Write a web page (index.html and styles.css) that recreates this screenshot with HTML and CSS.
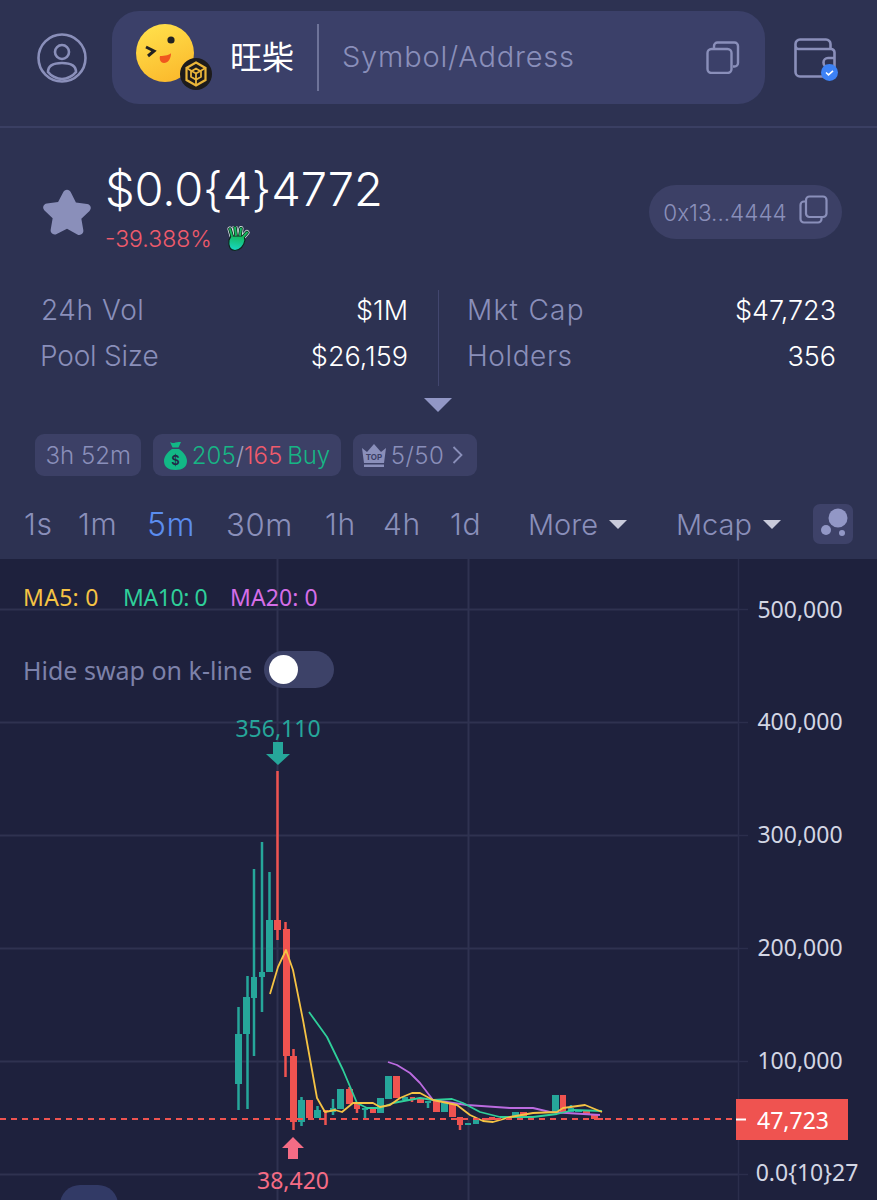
FILE: index.html
```html
<!DOCTYPE html>
<html lang="en">
<head>
<meta charset="utf-8">
<title>旺柴 chart</title>
<link rel="stylesheet" href="styles.css">
</head>
<body>
<div class="page">
  <header class="topbar">
    <svg class="avatar-icon" viewBox="0 0 50 50" fill="none" stroke="#8a8fba" stroke-width="2.6">
      <circle cx="25" cy="25" r="23.5"/>
      <circle cx="25" cy="19" r="7"/>
      <path d="M11 39c0-6 5-9 14-9s14 3 14 9c-3 4-9 7-14 7s-11-3-14-7z"/>
    </svg>
    <div class="search">
      <div class="token-logo">
        <svg class="emoji" viewBox="0 0 58 58">
          <defs><linearGradient id="emojiFill" x1="0.3" y1="0" x2="0.7" y2="1"><stop offset="0" stop-color="#ffdf4a"/><stop offset="1" stop-color="#fbb92c"/></linearGradient></defs>
          <circle cx="29" cy="29" r="29" fill="url(#emojiFill)"/>
          <path d="M10 23l8 4-6 5" fill="none" stroke="#222" stroke-width="3"/>
          <circle cx="35" cy="16" r="3.6" fill="#222"/>
          <path d="M24 32c5 0 10-1 11-3 0 6-3 10-7 10-3 0-5-3-4-7z" fill="#f0561e"/>
        </svg>
        <svg class="chain-badge" viewBox="0 0 32 32">
          <circle cx="16" cy="16" r="16" fill="#1d1b1c"/>
          <path d="M16 4.500l9.500 5.500v12L16 27.500 6.500 22V10z" fill="none" stroke="#e9b53a" stroke-width="2.200"/>
          <path d="M16 10.500l5 2.900v5.400L16 21.700l-5-2.900v-5.400zM6.500 10l9.500 5.500 9.500-5.500M16 15.500v12" fill="none" stroke="#e9b53a" stroke-width="1.800"/>
        </svg>
      </div>
      <span class="token-name">旺柴</span>
      <span class="search-divider"></span>
      <span class="placeholder">Symbol/Address</span>
      <svg class="paste-icon" viewBox="0 0 34 33" fill="none" stroke="#8a8fba" stroke-width="2.400">
        <rect x="1.500" y="8" width="24" height="24" rx="4"/>
        <path d="M8 7V5a3.500 3.500 0 0 1 3.500-3.500h17A3.500 3.500 0 0 1 32 5v17a3.500 3.500 0 0 1-3.500 3.500H27"/>
      </svg>
    </div>
    <div class="wallet">
      <svg class="wallet-icon" viewBox="0 0 42 40" fill="none" stroke="#8a8fba" stroke-width="2.600">
        <path d="M1.500 8V6a4.500 4.500 0 0 1 4.500-4.500h26A4.500 4.500 0 0 1 36.500 6v4"/>
        <path d="M1.500 8a3 3 0 0 0 3 3H37a3.500 3.500 0 0 1 3.500 3.500V34a4.500 4.500 0 0 1-4.500 4.500H6A4.500 4.500 0 0 1 1.500 34z"/>
        <path d="M40 20h-6a4.500 4.500 0 0 0 0 9h6"/>
      </svg>
      <svg class="wallet-check" viewBox="0 0 17 17">
        <circle cx="8.500" cy="8.500" r="8.500" fill="#3d82f5"/>
        <path d="M5 8.500l2.500 2.300L12 6.800" fill="none" stroke="#fff" stroke-width="1.600"/>
      </svg>
    </div>
  </header>

  <section class="summary">
    <div class="price-row">
      <svg class="star" viewBox="2 2 46 44"><path d="M25 2.500c1.600 0 2.800 1 3.500 2.500l4.700 9.300 10.300 1.500c3.300.5 4.500 4 2.200 6.300l-7.500 7.300 1.800 10.300c.6 3.200-2.600 5.600-5.500 4.100L25 38.500l-9.500 4.800c-2.900 1.500-6.100-.9-5.500-4.100l1.800-10.300-7.500-7.300c-2.300-2.300-1.100-5.800 2.200-6.300l10.300-1.500L21.500 5c.700-1.500 1.900-2.500 3.500-2.500z" fill="#8a8fba"/></svg>
      <div class="price-block">
        <div class="price">$0.0{4}4772</div>
        <div class="change">
          <span>-39.388%</span>
          <svg class="hand" viewBox="0 0 24 26">
            <defs><linearGradient id="handFill" x1="0.6" y1="0" x2="0.4" y2="1"><stop offset="0" stop-color="#16b85f"/><stop offset="1" stop-color="#17d8c4"/></linearGradient></defs>
            <path d="M6 10L4 3M10 9L9 1.500M14 9L15 2.500M17 11L21 6.500" fill="none" stroke="#dff5ee" stroke-width="5" stroke-linecap="round"/>
            <path d="M6 10L4 3M10 9L9 1.500M14 9L15 2.500M17 11L21 6.500" fill="none" stroke="#10231e" stroke-width="3.600" stroke-linecap="round"/>
            <path d="M5 10h13l1 4c-1 6-5 10.500-10 10.500S2 20 3 14z" fill="url(#handFill)" stroke="#10231e" stroke-width="1.200"/>
            <path d="M6 10L4 3M10 9L9 1.500M14 9L15 2.500M17 11L21 6.500" fill="none" stroke="#16b85f" stroke-width="2" stroke-linecap="round"/>
          </svg>
        </div>
      </div>
      <div class="address-pill">
        <span>0x13...4444</span>
        <svg class="pill-copy" viewBox="0 0 29 29" fill="none" stroke="#8a8fba" stroke-width="2.200">
          <rect x="7" y="1.500" width="20.500" height="20.500" rx="3.500"/>
          <path d="M7 6.500H5A3.500 3.500 0 0 0 1.500 10v14A3.500 3.500 0 0 0 5 27.500h14a3.500 3.500 0 0 0 3.500-3.500v-2"/>
        </svg>
      </div>
    </div>

    <div class="stats">
      <div class="stat"><span class="stat-label">24h Vol</span><span class="stat-value">$1M</span></div>
      <div class="stat"><span class="stat-label label-mcap">Mkt Cap</span><span class="stat-value">$47,723</span></div>
      <div class="stat"><span class="stat-label label-pool">Pool Size</span><span class="stat-value">$26,159</span></div>
      <div class="stat"><span class="stat-label">Holders</span><span class="stat-value">356</span></div>
    </div>
    <div class="expand-row"><span class="expand-arrow"></span></div>

    <div class="tags">
      <div class="tag">3h 52m</div>
      <div class="tag">
        <svg class="bag" viewBox="0 0 23 29">
          <path d="M6 1c2 1 3 1.500 5.500 .5S16 1 17 1l-2.500 5.500h-6zM8 8h7c4.500 3 8 7.500 8 12 0 6-4.500 9-11.500 9S0 26 0 20c0-4.500 3.500-9 8-12z" fill="#12b886"/>
          <text x="11.500" y="23.500" class="bag-sign">$</text>
        </svg>
        <span class="up">205</span><span class="slash">/</span><span class="down">165</span><span class="up buy">Buy</span>
      </div>
      <div class="tag tag-top">
        <svg class="crown" viewBox="0 0 24 25">
          <path d="M0 5l5 4 7-8 7 8 5-4-2 15H2z" fill="#8a8fba"/>
          <rect x="2" y="21.500" width="20" height="2.500" fill="#8a8fba"/>
          <text x="12" y="16.500" class="crown-text">TOP</text>
        </svg>
        <span>5/50</span>
        <svg class="chev" viewBox="0 0 11 20" fill="none" stroke="#8a8fba" stroke-width="1.800"><path d="M1.500 2l8 8-8 8"/></svg>
      </div>
    </div>

    <nav class="intervals">
      <span class="iv iv-1s">1s</span>
      <span class="iv iv-1m">1m</span>
      <span class="iv iv-5m active">5m</span>
      <span class="iv iv-30m">30m</span>
      <span class="iv iv-1h">1h</span>
      <span class="iv iv-4h">4h</span>
      <span class="iv iv-1d">1d</span>
      <span class="drop drop-more">More<i class="caret"></i></span>
      <span class="drop drop-mcap">Mcap<i class="caret"></i></span>
      <svg class="bubble" viewBox="0 0 40 40">
        <rect width="40" height="40" rx="7" fill="#3e4269"/>
        <circle cx="25" cy="14" r="9.500" fill="#9297c6"/>
        <circle cx="13" cy="26" r="5" fill="#9297c6"/>
        <circle cx="29" cy="29" r="3" fill="#9297c6"/>
      </svg>
    </nav>
  </section>

  <section class="chart">
    <svg class="chart-canvas" viewBox="0 559 877 641">
      <g class="grid">
        <path d="M0 609.500H738M0 722.500H738M0 835.500H738M0 948.500H738M0 1061.500H738M0 1174.500H738"/>
        <path d="M277.500 559V1200M468.500 559V1200"/>
      </g>
      <path class="axis-line" d="M738.500 559V1200"/>
      <path class="ticks" d="M738 609.500H748M738 722.500H748M738 835.500H748M738 948.500H748M738 1061.500H748M738 1174.500H748"/>

      <g class="wick-up">
        <path d="M238.500 1007V1110M247.500 976V1109M254 869V1056M262 842V1012M269.500 872V925M301.500 1097V1126M317.500 1106V1118M333 1099V1115M365 1108V1118M381 1098V1113M428 1101V1108M571 1105V1112"/>
      </g>
      <g class="body-up">
        <rect x="235" y="1034" width="7" height="50"/>
        <rect x="243" y="997" width="7" height="37"/>
        <rect x="251" y="977" width="6" height="21"/>
        <rect x="259" y="972" width="6" height="5"/>
        <rect x="266" y="920" width="7" height="52"/>
        <rect x="298" y="1100" width="7" height="22"/>
        <rect x="314" y="1110" width="7" height="8"/>
        <rect x="330" y="1108" width="6" height="4"/>
        <rect x="337" y="1089" width="7" height="20"/>
        <rect x="362" y="1108" width="6" height="2"/>
        <rect x="377" y="1098" width="7" height="15"/>
        <rect x="385" y="1076" width="7" height="23"/>
        <rect x="402" y="1097" width="6" height="3"/>
        <rect x="425" y="1101" width="6" height="2"/>
        <rect x="441" y="1103" width="7" height="9"/>
        <rect x="465" y="1123" width="6" height="2"/>
        <rect x="473" y="1119" width="6" height="5"/>
        <rect x="512" y="1112" width="7" height="5"/>
        <rect x="552" y="1095" width="7" height="17"/>
        <rect x="568" y="1108" width="6" height="4"/>
        <rect x="575" y="1110" width="7" height="2"/>
      </g>
      <g class="wick-down">
        <path d="M277.500 771V940M285.500 922V1077M293.500 1049V1130M309.500 1100V1120M325.500 1110V1125M349.500 1087V1104M357 1104V1113M412 1097V1102M460 1117V1130"/>
      </g>
      <g class="body-down">
        <rect x="274" y="920" width="7" height="10"/>
        <rect x="283" y="929" width="7" height="127"/>
        <rect x="290" y="1056" width="7" height="66"/>
        <rect x="306" y="1100" width="7" height="18"/>
        <rect x="323" y="1110" width="5" height="2"/>
        <rect x="346" y="1089" width="7" height="15"/>
        <rect x="354" y="1104" width="6" height="5"/>
        <rect x="370" y="1109" width="6" height="4"/>
        <rect x="393" y="1076" width="7" height="22"/>
        <rect x="410" y="1097" width="5" height="3"/>
        <rect x="417" y="1098" width="7" height="5"/>
        <rect x="433" y="1101" width="7" height="11"/>
        <rect x="449" y="1103" width="7" height="14"/>
        <rect x="457" y="1117" width="6" height="8"/>
        <rect x="482" y="1118" width="4" height="2"/>
        <rect x="489" y="1117" width="6" height="3"/>
        <rect x="520" y="1112" width="7" height="5"/>
        <rect x="560" y="1095" width="6" height="17"/>
        <rect x="583" y="1111" width="7" height="4"/>
        <rect x="591" y="1114" width="7" height="5"/>
        <rect x="598" y="1118" width="5" height="2"/>
      </g>

      <path class="ma ma20" d="M388 1062L397 1065L410 1073L420 1083L433 1100L467 1105L510 1108L533 1108L550 1112L600 1115"/>
      <path class="ma ma10" d="M309 1012L327 1037L343 1070L357 1103L367 1108L380 1108L393 1103L420 1098L433 1100L452 1099L463 1103L480 1112L500 1117L533 1117L557 1114L573 1110L602 1111"/>
      <path class="ma ma5" d="M270 994L278 967L286 950L293 970L303 1020L317 1098L325 1112L335 1110L342 1112L353 1103L373 1103L380 1107L390 1105L400 1098L412 1093L420 1093L433 1100L457 1105L470 1115L483 1121L493 1122L510 1117L533 1113L557 1112L563 1108L585 1105L602 1112"/>

      <path class="last-line" d="M0 1119H736"/>

      <path class="mark-up" d="M273 742h10v12h7l-12 11-12-11h7z"/>
      <text class="mark-label mark-high" x="278" y="737">356,110</text>
      <path class="mark-low-arrow" d="M293 1137l11 11h-6v11h-10v-11h-6z"/>
      <text class="mark-label mark-low" x="293" y="1189">38,420</text>

      <g class="axis-labels">
        <text x="800" y="618">500,000</text>
        <text x="800" y="730">400,000</text>
        <text x="800" y="843">300,000</text>
        <text x="800" y="956">200,000</text>
        <text x="800" y="1069">100,000</text>
        <text x="807" y="1181">0.0{10}27</text>
      </g>
      <rect class="last-box" x="736" y="1099" width="112" height="41"/>
      <path class="last-tick" d="M736 1119.500H746"/>
      <text class="last-text" x="793" y="1129">47,723</text>
    </svg>

    <div class="legend">
      <span class="ma5-text">MA5: 0</span>
      <span class="ma10-text">MA10: 0</span>
      <span class="ma20-text">MA20: 0</span>
    </div>
    <div class="swap-toggle">
      <span>Hide swap on k-line</span>
      <span class="switch"><span class="knob"></span></span>
    </div>
    <div class="peek"></div>
  </section>
</div>
</body>
</html>
```

FILE: styles.css
```css
* { box-sizing: border-box; }
html, body { margin: 0; padding: 0; background: #1e213d; }
body { font-family: "Inter", "Noto Sans CJK SC", sans-serif; font-weight: 300; color: #fff; }
.page { width: 877px; height: 1200px; overflow: hidden; display: flex; flex-direction: column; }

/* top bar */
.topbar { height: 128px; flex: none; background: #2d3252; border-bottom: 2px solid #3a3f63; display: flex; align-items: center; padding: 0 41px 0 37px; }
.avatar-icon { width: 50px; height: 50px; flex: none; margin-top: -11px; }
.search { width: 653px; height: 93px; margin: -11px 0 0 25px; background: #3b4069; border-radius: 27px; display: flex; align-items: center; padding-left: 24px; flex: none; }
.token-logo { width: 76px; height: 66px; position: relative; flex: none; margin-top: -2px; }
.emoji { width: 58px; height: 58px; position: absolute; left: 0; top: 0; }
.chain-badge { width: 32px; height: 32px; position: absolute; left: 44px; top: 34px; }
.token-name { font-size: 32px; font-weight: 400; font-family: "Noto Sans CJK SC", sans-serif; width: 65px; margin: -5px 0 0 18px; white-space: nowrap; }
.search-divider { width: 2px; height: 67px; background: #6e7399; margin: 0 23px 0 22px; flex: none; }
.placeholder { font-size: 29px; color: #8a8fba; letter-spacing: 0.8px; flex: 1; white-space: nowrap; margin-top: -2px; }
.paste-icon { width: 34px; height: 33px; margin-right: 25px; flex: none; }
.wallet { position: relative; width: 42px; height: 40px; margin: -10px 0 0 29px; flex: none; }
.wallet-icon { width: 42px; height: 40px; display: block; }
.wallet-check { position: absolute; width: 17px; height: 17px; left: 27px; top: 26px; }

/* summary */
.summary { height: 431px; flex: none; background: #2d3252; display: flex; flex-direction: column; }
.price-row { display: flex; align-items: flex-start; padding: 32px 35px 0 42px; height: 159px; flex: none; }
.star { width: 50px; height: 48px; flex: none; margin: 29px 13px 0 0; }
.price-block { flex: 1; }
.price { font-size: 47px; line-height: 58px; letter-spacing: -0.15px; }
.change { display: flex; align-items: center; gap: 14px; font-size: 23px; color: #ef5b6c; height: 28px; margin-top: 7px; }
.hand { width: 24px; height: 26px; }
.address-pill { height: 54px; margin-top: 25px; width: 193px; flex: none; background: #3c4066; border-radius: 27px; display: flex; align-items: center; justify-content: center; gap: 12px; font-size: 22.500px; color: #8a8fba; }
.pill-copy { width: 29px; height: 29px; flex: none; margin-top: -5px; }

.stats { display: grid; grid-template-columns: 397px 398px; padding-left: 41px; height: 92px; flex: none; grid-auto-rows: 46px; position: relative; }
.stats::after { content: ""; position: absolute; left: 438px; top: 3px; width: 1px; height: 96px; background: #42466e; }
.stat { display: flex; justify-content: space-between; align-items: center; padding-right: 30px; font-size: 27px; }
.stat:nth-child(even) { padding: 0 0 0 29px; }
.stat-label { color: #8a8fba; font-size: 28px; letter-spacing: 0.6px; }
.label-mcap { letter-spacing: 1.300px; }
.label-pool { letter-spacing: -0.200px; margin-left: -1px; }
.stat-value { color: #fff; font-weight: 300; }
.expand-row { position: relative; height: 43px; flex: none; }
.expand-arrow { position: absolute; left: 424px; top: 19px; width: 0; height: 0; border-left: 14px solid transparent; border-right: 14px solid transparent; border-top: 14px solid #9297c6; }

.tags { display: flex; gap: 12px; padding: 12px 0 0 35px; flex: none; }
.tag { height: 42px; padding: 0 10.500px; background: #3c4066; border-radius: 9px; display: flex; align-items: center; font-size: 24px; color: #8a8fba; white-space: nowrap; }
.bag { width: 23px; height: 29px; margin-right: 5px; }
.bag-sign { font-family: "Inter", sans-serif; font-size: 13px; font-weight: 600; fill: #232846; text-anchor: middle; }
.up { color: #17b585; }
.down { color: #ef5b6c; }
.slash { color: #9a9ebd; }
.buy { margin-left: 5px; }
.tag-top { padding: 0 14px 0 9px; letter-spacing: 0.5px; }
.crown { width: 24px; height: 25px; margin-right: 5px; }
.crown-text { font-family: "Inter", sans-serif; font-size: 8px; font-weight: 700; fill: #3c4066; text-anchor: middle; letter-spacing: 0; }
.chev { width: 11px; height: 20px; margin-left: 8px; }

.intervals { display: flex; align-items: center; padding: 28px 0 0 24px; font-size: 29px; color: #8a8fba; white-space: nowrap; flex: none; }
.iv { font-size: 30px; letter-spacing: 0.6px; }
.iv-1s { width: 54px; }
.iv-1m { width: 70px; }
.iv-5m { width: 79px; font-size: 32px; margin-left: -1px; margin-right: 1px; }
.iv-30m { width: 98px; font-size: 31px; margin-left: -1px; margin-right: 1px; }
.iv-1h { width: 58px; }
.iv-4h { width: 67px; }
.iv-1d { width: 78px; }
.active { color: #5b8def; }
.drop { display: flex; align-items: center; gap: 11px; }
.drop-more { width: 148px; }
.drop-mcap { width: 137px; }
.caret { display: block; width: 0; height: 0; border-left: 9px solid transparent; border-right: 9px solid transparent; border-top: 9px solid #c9cbdb; }
.bubble { width: 40px; height: 40px; flex: none; }

/* chart */
.chart { position: relative; flex: 1; background: #1e213d; overflow: hidden; }
.chart-canvas { position: absolute; left: 0; top: 0; width: 877px; height: 641px; display: block; }
.grid path { stroke: #2f3250; stroke-width: 2; fill: none; }
.axis-line { stroke: #2b2e4c; stroke-width: 1.500; fill: none; }
.ticks { stroke: #2b2e4c; stroke-width: 1.500; fill: none; }
.wick-up path { stroke: #26a69a; stroke-width: 2.500; fill: none; }
.body-up rect { fill: #26a69a; }
.wick-down path { stroke: #ef5350; stroke-width: 2.500; fill: none; }
.body-down rect { fill: #ef5350; }
.ma { fill: none; stroke-width: 1.800; stroke-linejoin: round; }
.ma5 { stroke: #f5c344; }
.ma10 { stroke: #2fcf9a; }
.ma20 { stroke: #bb6be0; }
.last-line { stroke: #ef5350; stroke-width: 2; stroke-dasharray: 6 5; fill: none; }
.mark-up { fill: #26a69a; }
.mark-low-arrow { fill: #f56c85; }
.mark-label { font-family: "Noto Sans", sans-serif; font-size: 23px; font-weight: 400; text-anchor: middle; }
.mark-high { fill: #26a69a; }
.mark-low { fill: #f56c85; }
.axis-labels text { font-family: "Noto Sans", sans-serif; font-size: 23px; font-weight: 400; fill: #d3d6e4; text-anchor: middle; }
.last-box { fill: #ef5350; }
.last-tick { stroke: #fff; stroke-width: 2; fill: none; }
.last-text { font-family: "Noto Sans", sans-serif; font-size: 23px; font-weight: 400; fill: #fff; text-anchor: middle; }

.legend { position: absolute; left: 23px; top: 24px; display: flex; font-family: "Noto Sans", sans-serif; font-size: 23px; font-weight: 400; line-height: 28px; }
.ma5-text { color: #f5c344; width: 100px; letter-spacing: 0.3px; }
.ma10-text { color: #2fcf9a; width: 107px; letter-spacing: -0.4px; }
.ma20-text { color: #d56ee8; letter-spacing: 0.1px; }
.swap-toggle { position: absolute; left: 23px; top: 92px; display: flex; align-items: center; gap: 12px; font-family: "Noto Sans", sans-serif; font-weight: 400; font-size: 25px; color: #7d82aa; }
.switch { width: 70px; height: 37px; border-radius: 19px; background: #3d4268; position: relative; display: block; }
.knob { position: absolute; left: 5px; top: 4px; width: 29px; height: 29px; border-radius: 50%; background: #fff; }
.peek { position: absolute; left: 60px; top: 626px; width: 58px; height: 30px; border-radius: 20px 20px 0 0; background: #323a66; }
```
